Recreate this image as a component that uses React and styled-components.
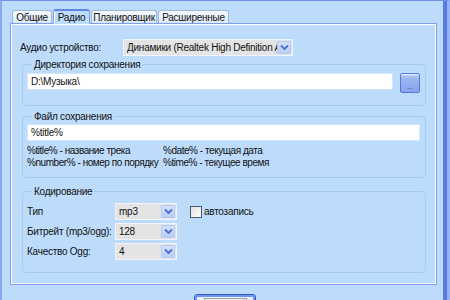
import React from 'react';
import styled, { createGlobalStyle } from 'styled-components';

const GlobalStyle = createGlobalStyle`
    html, body {
        margin: 0;
        padding: 0;
        background: #bddcfb;
    }
    body {
        font-family: 'Liberation Sans', Arial, sans-serif;
        font-size: 10px;
        letter-spacing: -0.25px;
        color: #111;
    }
`

const Window = styled.div`
    width: 450px;
    height: 300px;
    box-sizing: border-box;
    overflow: hidden;
    display: flex;
    flex-direction: column;
    background: #bddcfb;
    border-top: 1px solid #6f91e9;
    border-left: 2px solid #88a8f0;
    border-right: 3px solid #93b3f6;
    box-shadow: inset -4px 0 0 #5a7ce2;
    padding: 7px 0 0 8px;

    & > * {
        flex: none;
    }
`

const TabStrip = styled.div`
    display: flex;
    align-items: flex-end;
    gap: 1px;
    padding-left: 2px;
    height: 15px;
    position: relative;
    z-index: 1;
`

const Tab = styled.div`
    box-sizing: border-box;
    width: ${p => p.$w}px;
    height: ${p => (p.$active ? 15 : 13)}px;
    margin-bottom: ${p => (p.$active ? -1 : 0)}px;
    display: flex;
    align-items: center;
    justify-content: center;
    border: 1px solid ${p => (p.$active ? '#7d9fec' : '#9fb6d9')};
    border-bottom: ${p => (p.$active ? '1px solid #bddcfb' : 'none')};
    border-top: ${p => (p.$active ? '2px solid #5f86e6' : '1px solid #9fb6d9')};
    border-radius: 3px 3px 0 0;
    background: ${p => (p.$active ? '#bddcfb' : 'linear-gradient(#f7fafe, #dde9f8)')};
    box-shadow: ${p => (p.$active ? 'inset 1px 0 0 #fff' : 'none')};
    white-space: nowrap;
`

const Panel = styled.div`
    box-sizing: border-box;
    width: 427px;
    height: 262px;
    border: 1px solid #7d9fec;
    box-shadow: inset 1px 1px 0 #fff, inset -1px -1px 0 #fff;
    padding: 15px 10px 0 9px;
    display: flex;
    flex-direction: column;

    & > * {
        flex: none;
    }
`

const DeviceRow = styled.div`
    display: flex;
    align-items: center;
    height: 17px;
`

const DeviceLabel = styled.span`
    width: 103px;
    flex: none;
    white-space: nowrap;
`

const Group = styled.fieldset`
    margin: ${p => p.$gap}px 0 0 2px;
    padding: ${p => p.$pt}px 5px ${p => p.$pb}px 4px;
    border: 1px solid #a5c9f3;
    border-radius: 4px;
    min-width: 0;
`

const GroupTitle = styled.legend`
    padding: 0 2px;
    margin-left: 5px;
    line-height: 13px;
    height: 13px;
`

const Row = styled.div`
    display: flex;
    align-items: ${p => p.$align || 'flex-start'};
    gap: ${p => p.$gap || 0}px;
    margin-top: ${p => p.$top || 0}px;
    white-space: nowrap;
`

const TextField = styled.div`
    flex: 1;
    box-sizing: border-box;
    height: 17px;
    background: #fff;
    border: 1px solid #d3e6fb;
    padding: 0 3px;
    line-height: 15px;
    white-space: nowrap;
    overflow: hidden;
`

const BrowseButton = styled.div`
    box-sizing: border-box;
    width: 20px;
    height: 20px;
    flex: none;
    border: 1px solid #5777d8;
    border-radius: 2px;
    background: linear-gradient(#c4d6f7 0%, #9bb6ef 25%, #86a6ec 100%);
    box-shadow: inset 0 1px 0 #e6eefd;
    display: flex;
    align-items: flex-end;
    justify-content: center;
    color: #5d6680;
    font-size: 9px;
    line-height: 12px;
    letter-spacing: -0.5px;
`

const Hints = styled.div`
    display: grid;
    grid-template-columns: 136px auto;
    line-height: 12px;
    margin-top: 4px;
    white-space: nowrap;
    letter-spacing: -0.45px;
`

const FieldLabel = styled.span`
    width: 88px;
    flex: none;
`

const Combo = styled.div`
    box-sizing: border-box;
    width: ${p => p.$w}px;
    height: 17px;
    flex: none;
    display: flex;
    align-items: center;
    background: #e4e4e4;
    border: 1px solid #eef5fe;
    padding: 0 1px 0 3px;
`

const ComboText = styled.span`
    flex: 1;
    white-space: nowrap;
    overflow: hidden;
`

const ComboArrow = styled.div`
    box-sizing: border-box;
    width: 14px;
    height: 13px;
    flex: none;
    display: flex;
    align-items: center;
    justify-content: center;
    background: linear-gradient(#d3e1fa, #b9cef5);
    border: 1px solid #b4c9f1;
    border-radius: 1px;
`

const Check = styled.div`
    box-sizing: border-box;
    width: 12px;
    height: 12px;
    margin-left: 13px;
    flex: none;
    background: linear-gradient(135deg, #e2e2dc, #fff);
    border: 1px solid #4a5c6e;
`

const CheckLabel = styled.span`
    margin-left: 2px;
`

const Footer = styled.div`
    display: flex;
    padding: 9px 0 0 184px;
`

const MainButton = styled.div`
    box-sizing: border-box;
    width: 62px;
    height: 23px;
    border: 1px solid #2e58c8;
    border-radius: 3px;
    background: #e9eff9;
    box-shadow: inset 0 0 0 2px #6f98ee;
    display: flex;
    justify-content: center;
    padding-top: 3px;
`

const FocusRect = styled.div`
    box-sizing: border-box;
    width: 43px;
    height: 15px;
    border: 1px solid #a3a3a3;
    display: flex;
    justify-content: center;
    padding-top: 1px;
    line-height: 12px;
`

const Chevron = () => (
    <svg width="9" height="7" viewBox="0 0 9 7">
        <path d="M1 1.5 L4.5 5 L8 1.5" fill="none" stroke="#4b6bd3" strokeWidth="1.8" />
    </svg>
)

const Select = ({ w, value }) => (
    <Combo $w={w}>
        <ComboText>{value}</ComboText>
        <ComboArrow><Chevron /></ComboArrow>
    </Combo>
)

const tabs = [
    { title: 'Общие', w: 40 },
    { title: 'Радио', w: 37, active: true },
    { title: 'Планировщик', w: 66 },
    { title: 'Расширенные', w: 71 },
]

const encodingRows = [
    { label: 'Тип', value: 'mp3', checkbox: true },
    { label: 'Битрейт (mp3/ogg):', value: '128' },
    { label: 'Качество Ogg:', value: '4' },
]

export default function App() {
    return (
        <>
            <GlobalStyle />
            <Window>
                <TabStrip>
                    {tabs.map(t => (
                        <Tab key={t.title} $w={t.w} $active={t.active}>{t.title}</Tab>
                    ))}
                </TabStrip>
                <Panel>
                    <DeviceRow>
                        <DeviceLabel>Аудио устройство:</DeviceLabel>
                        <Select w={170} value="Динамики (Realtek High Definition Audio)" />
                    </DeviceRow>

                    <Group $gap={2} $pt={2} $pb={12}>
                        <GroupTitle>Директория сохранения</GroupTitle>
                        <Row $gap={7}>
                            <TextField>D:\Музыка\</TextField>
                            <BrowseButton>...</BrowseButton>
                        </Row>
                    </Group>

                    <Group $gap={4} $pt={1} $pb={8}>
                        <GroupTitle>Файл сохранения</GroupTitle>
                        <Row>
                            <TextField>%title%</TextField>
                        </Row>
                        <Hints>
                            <span>%title% - название трека</span>
                            <span>%date% - текущая дата</span>
                            <span>%number% - номер по порядку</span>
                            <span>%time% - текущее время</span>
                        </Hints>
                    </Group>

                    <Group $gap={7} $pt={5} $pb={12}>
                        <GroupTitle>Кодирование</GroupTitle>
                        {encodingRows.map((r, i) => (
                            <Row key={r.label} $align="center" $top={i ? 3 : 0}>
                                <FieldLabel>{r.label}</FieldLabel>
                                <Select w={62} value={r.value} />
                                {r.checkbox && (
                                    <>
                                        <Check />
                                        <CheckLabel>автозапись</CheckLabel>
                                    </>
                                )}
                            </Row>
                        ))}
                    </Group>
                </Panel>
                <Footer>
                    <MainButton>
                        <FocusRect>Закрыть</FocusRect>
                    </MainButton>
                </Footer>
            </Window>
        </>
    );
}
